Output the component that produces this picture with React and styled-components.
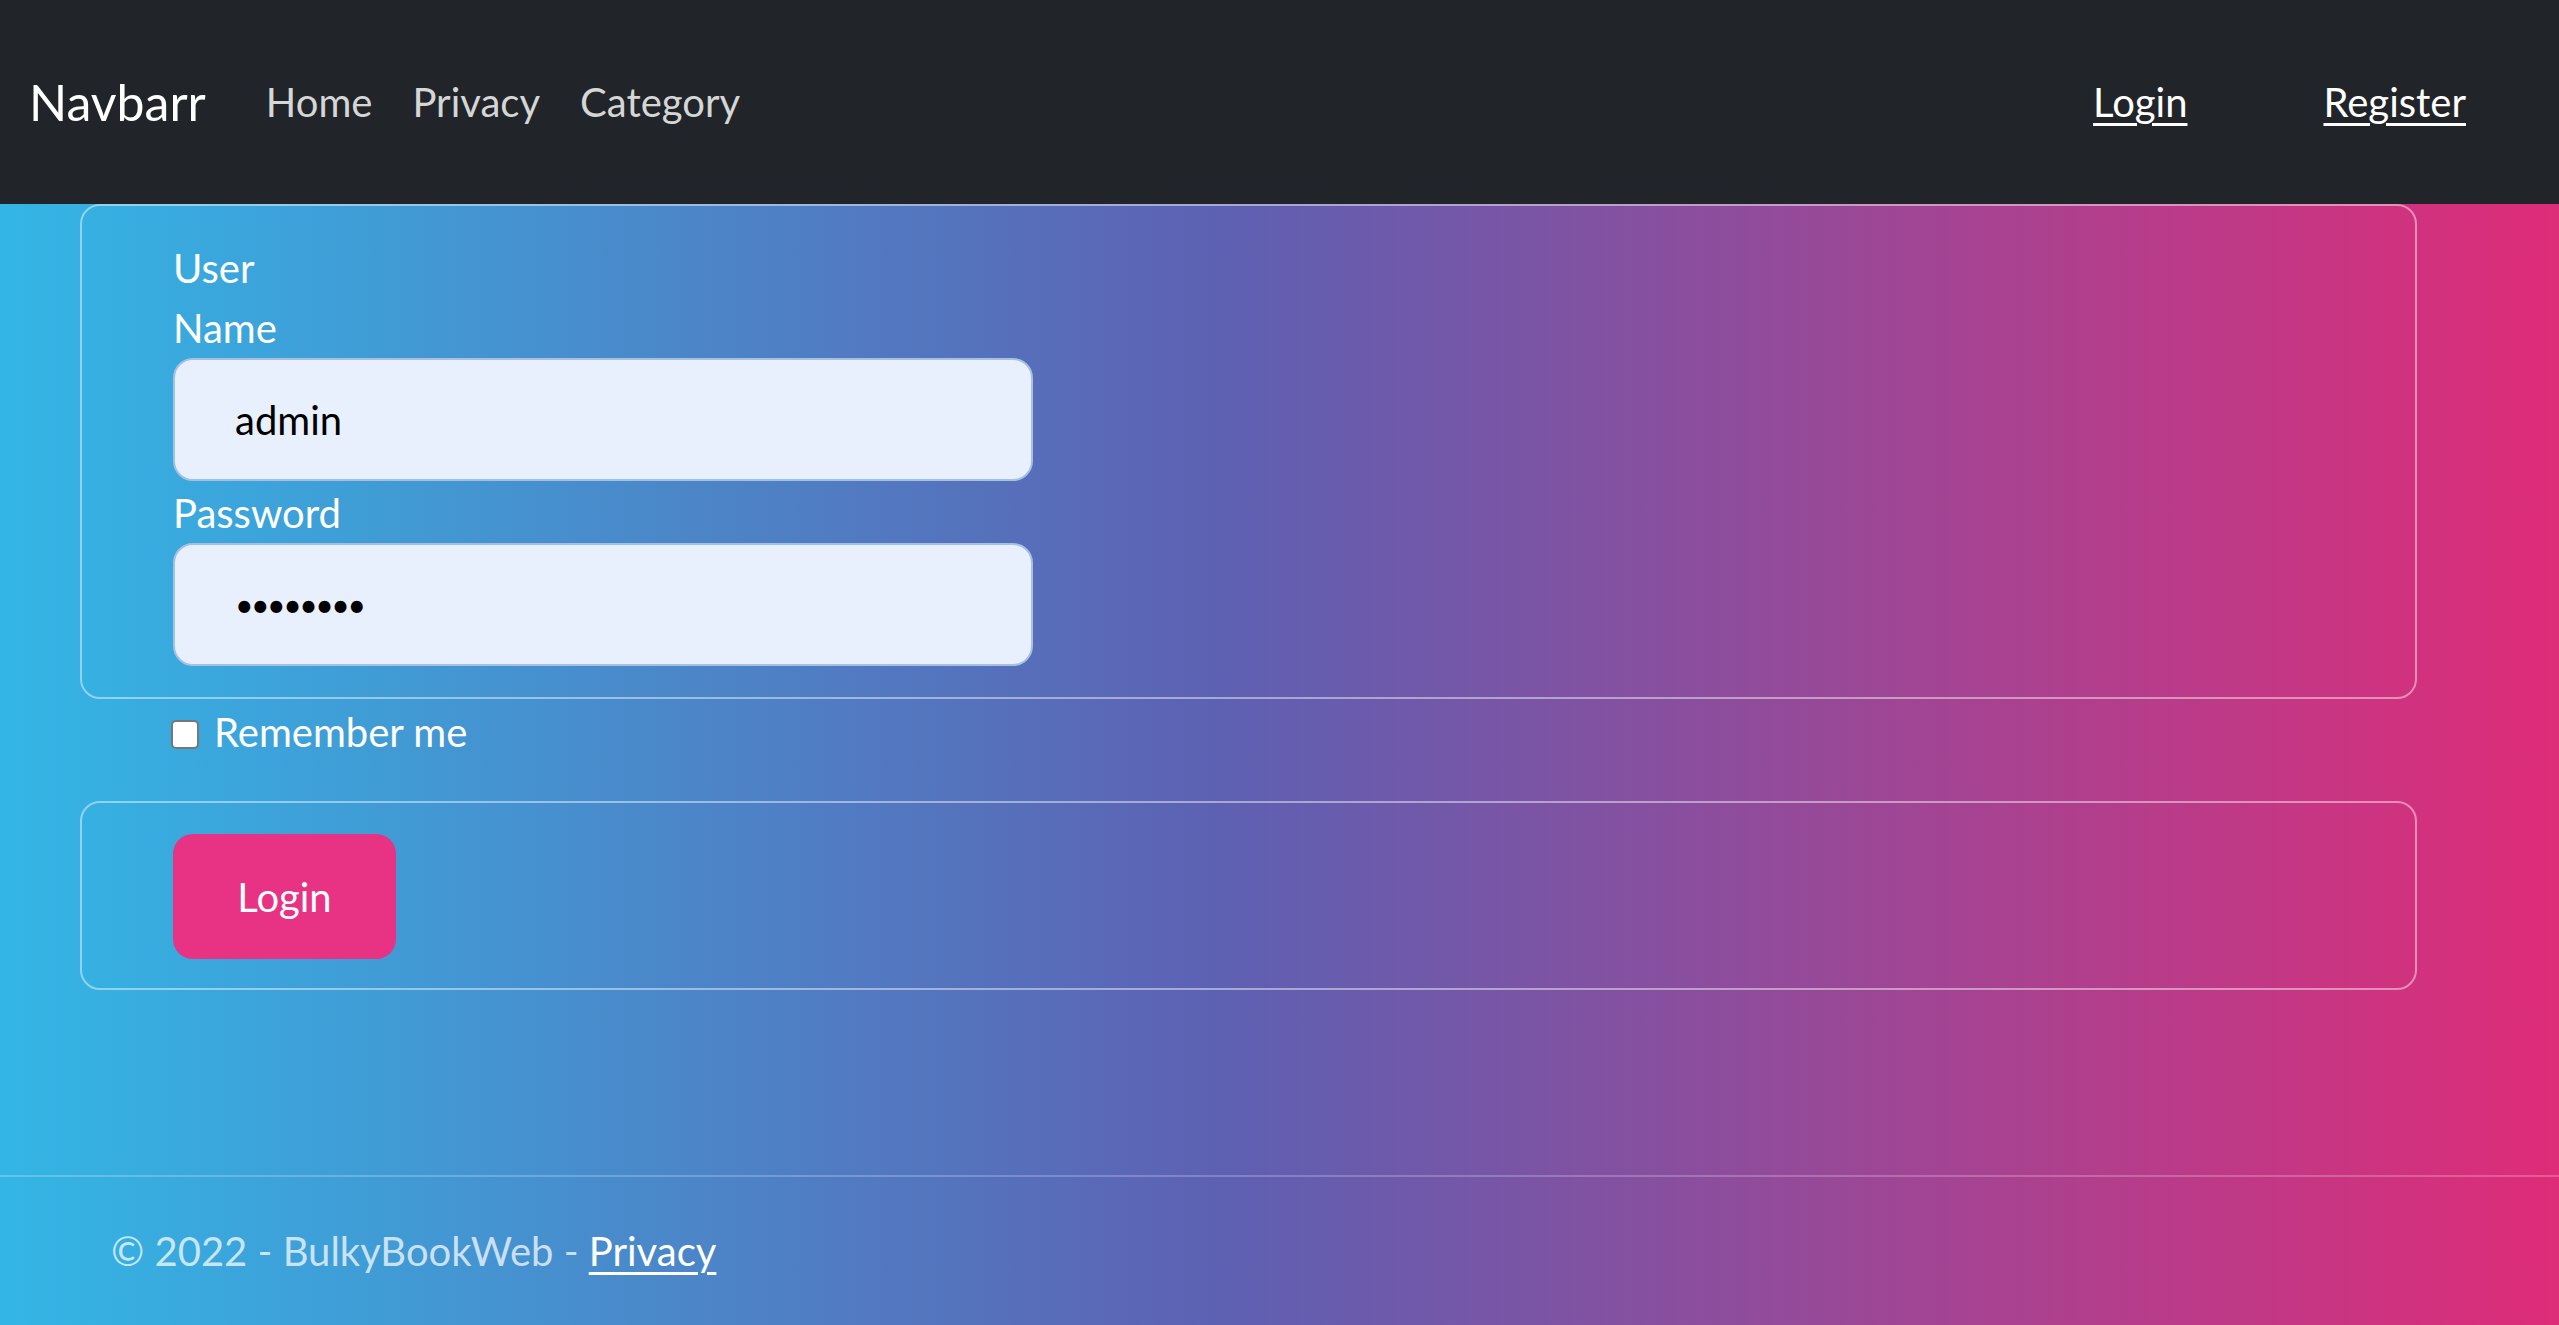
import styled, { createGlobalStyle } from "styled-components";

const GlobalStyle = createGlobalStyle`
  html, body {
    margin: 0;
    padding: 0;
  }
  body {
    font-family: Lato, "Open Sans", "Liberation Sans", sans-serif;
    font-size: 40px;
    line-height: 60px;
    color: #fff;
    background: linear-gradient(to right, #33b6e5 0%, #5e60b2 48%, #de2c78 100%);
    min-height: 100vh;
  }
  * {
    box-sizing: border-box;
  }
`;

const Page = styled.div`
  min-height: 100vh;
  display: flex;
  flex-direction: column;
`;

const Nav = styled.nav`
  height: 204px;
  background: #212529;
  display: flex;
  align-items: center;
  justify-content: space-between;
  padding: 0 93px 0 29px;
`;

const Left = styled.div`
  display: flex;
  align-items: center;
`;

const Brand = styled.a`
  font-size: 50px;
  color: #fff;
  text-decoration: none;
  margin-right: 40px;
`;

const NavItem = styled.a`
  color: rgba(255, 255, 255, 0.82);
  text-decoration: none;
  padding: 0 20px;
`;

const Right = styled.div`
  display: flex;
  align-items: center;
  gap: 136px;
`;

const AuthLink = styled.a`
  color: #fff;
  text-decoration: underline;
  text-underline-offset: 6px;
  text-decoration-thickness: 3px;
`;

const Main = styled.main`
  flex: 1;
  padding: 0 142px 0 80px;
`;

const Card = styled.div`
  border: 2px solid rgba(255, 255, 255, 0.45);
  border-radius: 20px;
  padding: ${(p) => p.$pad || "32px 0 31px 91px"};
`;

const Label = styled.label`
  display: block;
  width: 140px;
  margin-top: ${(p) => p.$gap || "0"};
`;

const Field = styled.input`
  display: block;
  width: 860px;
  height: 123px;
  background: #e8f0fe;
  border: 2px solid #a6c0e2;
  border-radius: 20px;
  padding: 0 60px;
  font-family: inherit;
  font-size: 40px;
  color: #000;
  outline: none;

  &[type="password"] {
    font-size: 32px;
    letter-spacing: -2.5px;
  }
`;

const CheckRow = styled.div`
  display: flex;
  align-items: center;
  gap: 15px;
  margin: 3px 0 39px 91px;
  height: 60px;
`;

const Check = styled.input`
  appearance: none;
  width: 28px;
  height: 29px;
  margin: 4px 0 0;
  background: #fff;
  border: 2px solid #777;
  border-radius: 5px;
`;

const Button = styled.button`
  height: 125px;
  width: 223px;
  background: #e83283;
  border: none;
  border-radius: 20px;
  color: #fff;
  font-family: inherit;
  font-size: 40px;
`;

const Footer = styled.footer`
  border-top: 2px solid rgba(255, 255, 255, 0.22);
  line-height: 148px;
  padding-left: 111px;
  color: rgba(255, 255, 255, 0.72);
  white-space: nowrap;
`;

const FooterLink = styled.a`
  color: #fff;
  text-decoration: underline;
  text-underline-offset: 6px;
  text-decoration-thickness: 3px;
`;

export default function App() {
  return (
    <Page>
      <GlobalStyle />
      <Nav>
        <Left>
          <Brand href="#">Navbarr</Brand>
          <NavItem href="#">Home</NavItem>
          <NavItem href="#">Privacy</NavItem>
          <NavItem href="#">Category</NavItem>
        </Left>
        <Right>
          <AuthLink href="#">Login</AuthLink>
          <AuthLink href="#">Register</AuthLink>
        </Right>
      </Nav>
      <Main>
        <Card>
          <Label htmlFor="user">User Name</Label>
          <Field id="user" defaultValue="admin" />
          <Label htmlFor="pass" $gap="2px">Password</Label>
          <Field id="pass" type="password" defaultValue="password" />
        </Card>
        <CheckRow>
          <Check type="checkbox" id="remember" />
          <label htmlFor="remember">Remember me</label>
        </CheckRow>
        <Card $pad="31px 0 29px 91px">
          <Button>Login</Button>
        </Card>
      </Main>
      <Footer>
        © 2022 - BulkyBookWeb - <FooterLink href="#">Privacy</FooterLink>
      </Footer>
    </Page>
  );
}
